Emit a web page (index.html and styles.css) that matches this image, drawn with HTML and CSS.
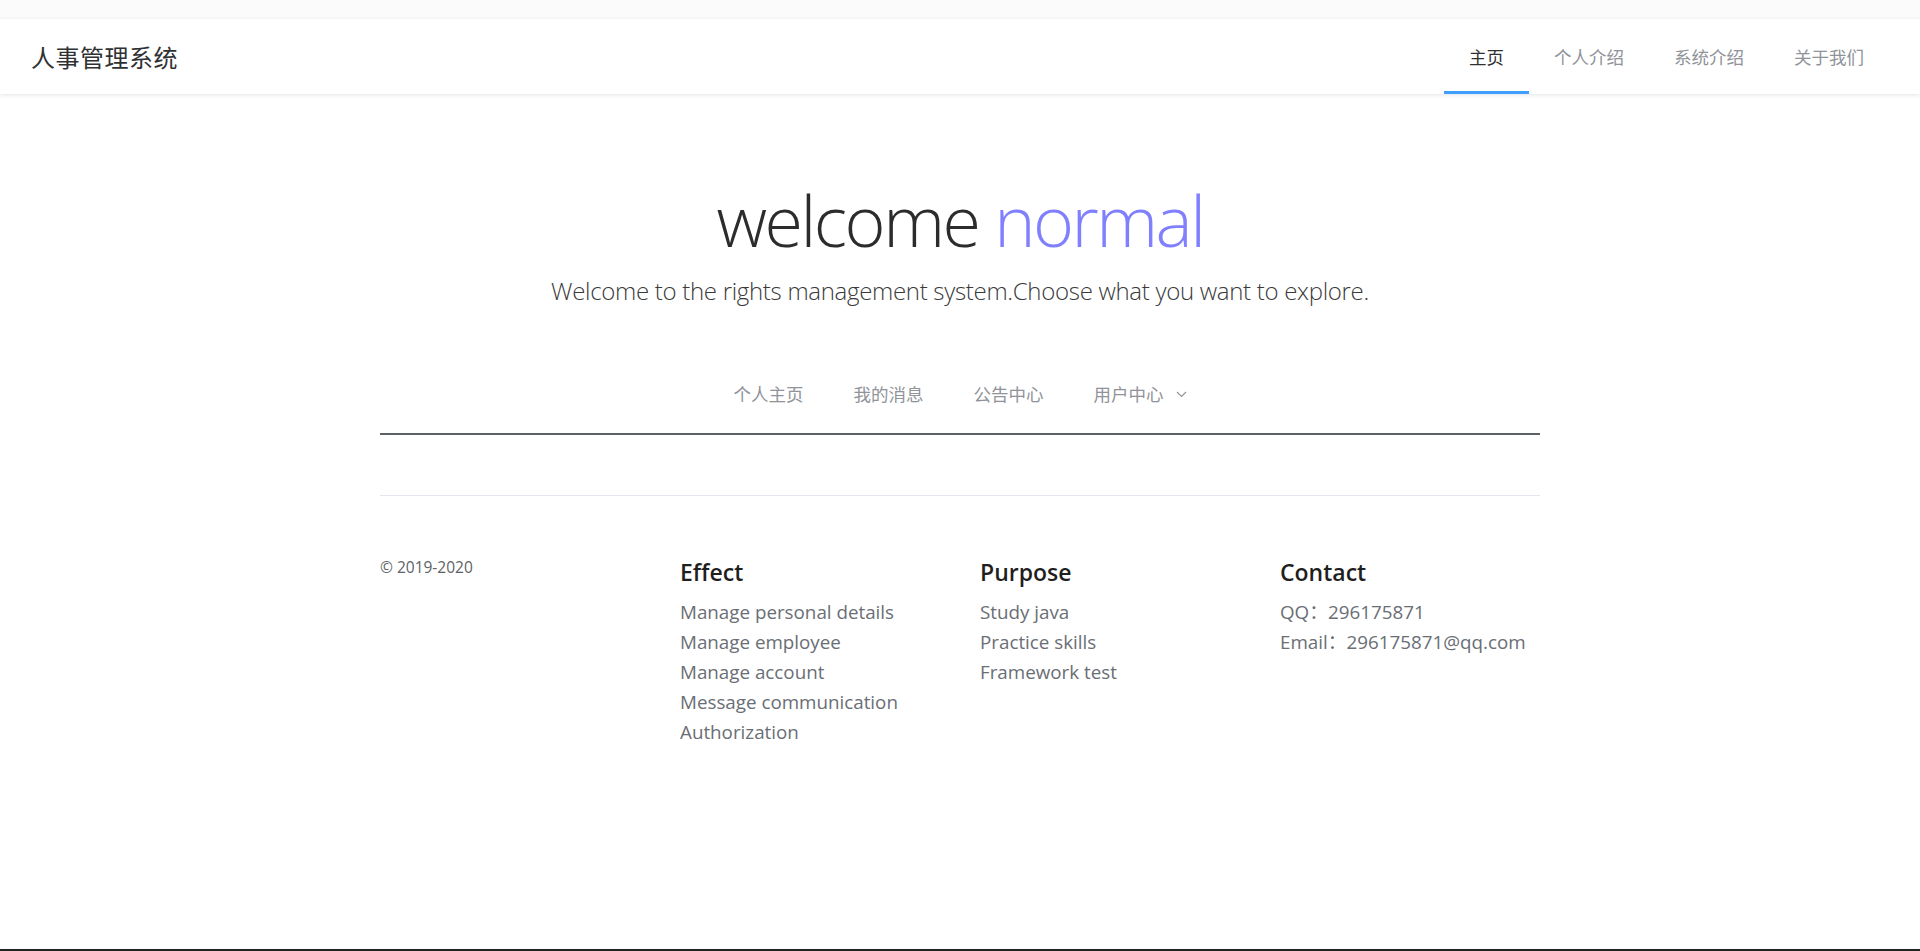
FILE: index.html
```html
<!DOCTYPE html>
<html lang="zh-CN">
<head>
<meta charset="utf-8">
<title>人事管理系统</title>
<link rel="stylesheet" href="styles.css">
</head>
<body>
<div class="page">
  <div class="topstrip"></div>
  <header class="header">
    <div class="brand">人事管理系统</div>
    <nav class="topnav">
      <a class="topnav-item active">主页</a>
      <a class="topnav-item">个人介绍</a>
      <a class="topnav-item">系统介绍</a>
      <a class="topnav-item">关于我们</a>
    </nav>
  </header>

  <main class="main">
    <section class="hero">
      <h1 class="hero-title">welcome <span class="hero-name">normal</span></h1>
      <p class="hero-sub">Welcome to the rights management system.Choose what you want to explore.</p>
    </section>

    <div class="container">
      <nav class="subnav">
        <a class="subnav-item">个人主页</a>
        <a class="subnav-item">我的消息</a>
        <a class="subnav-item">公告中心</a>
        <a class="subnav-item">用户中心
          <svg class="arrow" width="11" height="7" viewBox="0 0 11 7"><path d="M1 1 L5.5 5.5 L10 1" fill="none" stroke="#909399" stroke-width="1.1"/></svg>
        </a>
      </nav>
      <div class="content"></div>
      <footer class="footer">
        <div class="footer-col copy">© 2019-2020</div>
        <div class="footer-col">
          <h3 class="footer-title">Effect</h3>
          <ul class="footer-list">
            <li>Manage personal details</li>
            <li>Manage employee</li>
            <li>Manage account</li>
            <li>Message communication</li>
            <li>Authorization</li>
          </ul>
        </div>
        <div class="footer-col">
          <h3 class="footer-title">Purpose</h3>
          <ul class="footer-list">
            <li>Study java</li>
            <li>Practice skills</li>
            <li>Framework test</li>
          </ul>
        </div>
        <div class="footer-col">
          <h3 class="footer-title">Contact</h3>
          <ul class="footer-list">
            <li>QQ：296175871</li>
            <li>Email：296175871@qq.com</li>
          </ul>
        </div>
      </footer>
    </div>
  </main>
  <div class="bottombar"></div>
</div>
</body>
</html>
```

FILE: styles.css
```css
* { box-sizing: border-box; }
html, body { margin: 0; padding: 0; }
body {
  font-family: "Open Sans", "Noto Sans CJK SC", sans-serif;
  background: #fff;
  color: #303133;
}
.page {
  min-height: 951px;
  height: 951px;
  display: flex;
  flex-direction: column;
  overflow: hidden;
}
.topstrip {
  height: 19px;
  background: #fbfbfb;
  flex: none;
}
.header {
  flex: none;
  height: 75px;
  background: #fff;
  display: flex;
  align-items: center;
  justify-content: space-between;
  padding: 0 31px;
  box-shadow: 0 1px 4px rgba(0, 21, 41, 0.12);
  position: relative;
  z-index: 1;
}
.brand {
  font-family: "Noto Sans CJK SC", sans-serif;
  font-size: 24px;
  color: #303133;
  letter-spacing: 0.5px;
}
.topnav {
  display: flex;
  height: 75px;
}
.topnav-item {
  font-family: "Noto Sans CJK SC", sans-serif;
  display: block;
  height: 75px;
  line-height: 75px;
  padding: 0 25px;
  font-size: 17.5px;
  color: #909399;
  border-bottom: 3px solid transparent;
}
.topnav-item.active {
  color: #303133;
  border-bottom-color: #409eff;
}
.main {
  flex: 1;
}
.hero {
  text-align: center;
  padding-top: 81px;
}
.hero-title {
  margin: 0;
  font-weight: 300;
  font-size: 70px;
  line-height: 90px;
  color: #2c2c2c;
  letter-spacing: -2.5px;
}
.hero-name {
  color: #8080ff;
}
.hero-sub {
  margin: 10px 0 0;
  font-weight: 300;
  font-size: 24px;
  line-height: 32px;
  color: #3a3a3a;
  letter-spacing: -0.3px;
}
.container {
  width: 1160px;
  margin: 0 auto;
}
.subnav {
  margin-top: 52px;
  height: 76px;
  display: flex;
  justify-content: center;
  border-bottom: 2px solid #5c6067;
}
.subnav-item {
  font-family: "Noto Sans CJK SC", sans-serif;
  display: flex;
  align-items: center;
  height: 74px;
  padding: 0 25px 6px;
  font-size: 17.5px;
  color: #909399;
}
.arrow {
  margin-left: 12px;
  margin-top: 2px;
}
.content {
  height: 61px;
  border-bottom: 1px solid #e4e7ed;
}
.footer {
  display: grid;
  grid-template-columns: repeat(4, 1fr);
  column-gap: 40px;
  padding-top: 60px;
}
.copy {
  font-size: 15.5px;
  color: #606266;
  line-height: 20px;
  margin-top: 1px;
}
.footer-title {
  margin: 0 0 9px;
  font-size: 23px;
  font-weight: 600;
  line-height: 32px;
  color: #1f1f1f;
}
.footer-list {
  list-style: none;
  margin: 0;
  padding: 0;
}
.footer-list li {
  font-size: 18.8px;
  line-height: 30px;
  color: #6a6e75;
}
.bottombar {
  flex: none;
  height: 2px;
  background: #222;
}
```
